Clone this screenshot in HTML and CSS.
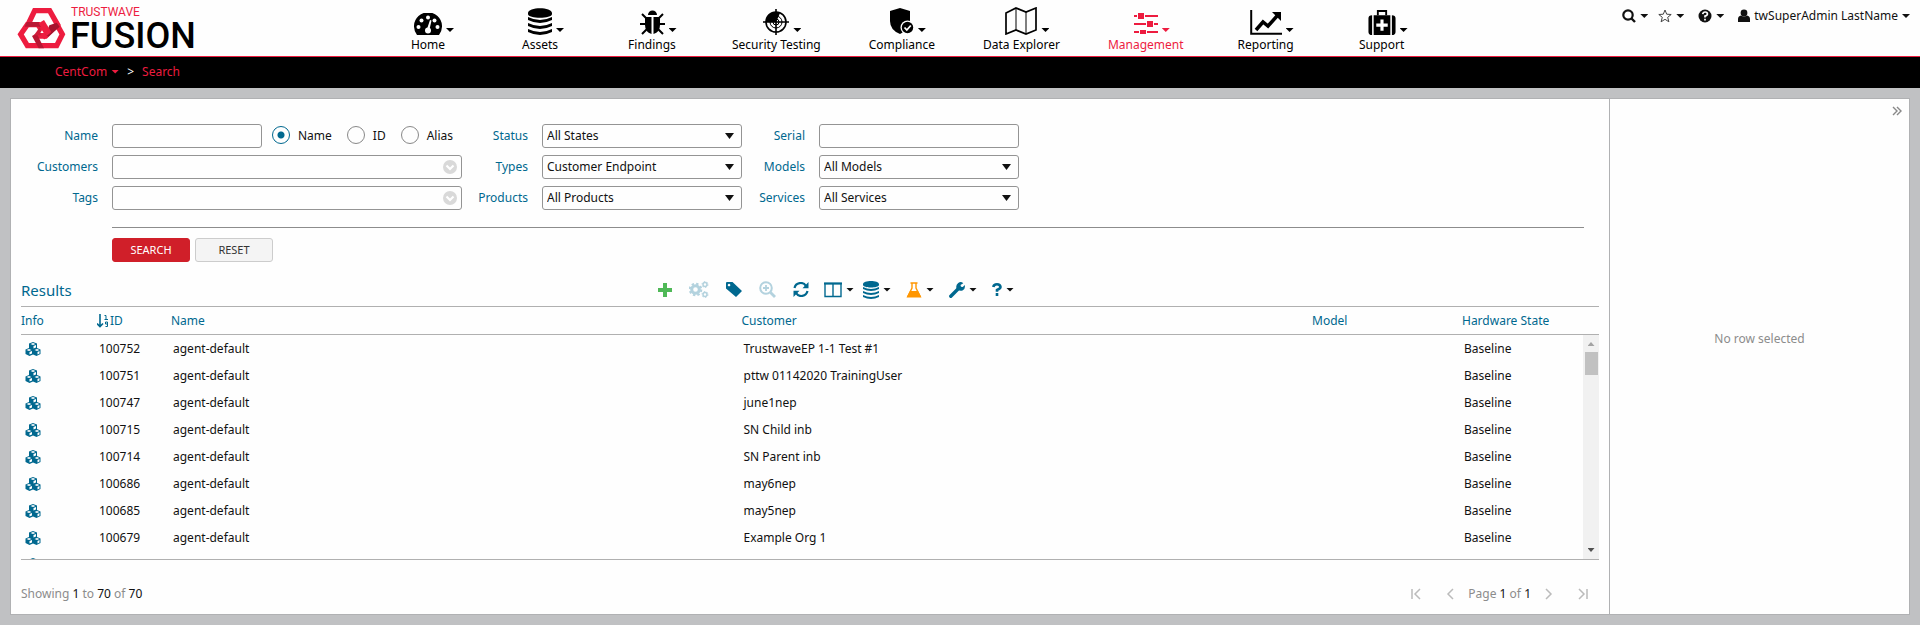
FILE: index.html
```html
<!DOCTYPE html>
<html lang="en">
<head>
<meta charset="utf-8">
<title>Fusion - Search</title>
<link rel="stylesheet" href="styles.css">
</head>
<body>
<svg class="defs" aria-hidden="true">
  <symbol id="cubes" viewBox="0 0 32 28">
    <path fill="currentColor" fill-rule="evenodd" d="M16 0l8 3v9l7 3v9l-8 4-7-3-7 3-8-4v-9l7-3V3zM16 2l-5 2 5 2 5-2zM17 13l5-2V6l-5 2zM8 14l-5 2 5 2 5-2zM9 25l5-2v-5l-5 2zM24 14l-5 2 5 2 5-2zM25 25l4-2v-5l-4 2z"/>
  </symbol>
  <symbol id="db" viewBox="0 0 24 27">
    <path fill="currentColor" d="M0 5C0-1.500 24-1.500 24 5v1C24 11 0 11 0 6zM0 9q12 6 24 0v3q-12 6-24 0zM0 15q12 6 24 0v3q-12 6-24 0zM0 21q12 6 24 0v3q-12 6-24 0z"/>
  </symbol>
  <symbol id="first" viewBox="0 0 10 12"><path d="M1 1v10M9 1L4 6l5 5" fill="none" stroke="currentColor" stroke-width="1.500"/></symbol>
  <symbol id="prev" viewBox="0 0 10 12"><path d="M8 1L3 6l5 5" fill="none" stroke="currentColor" stroke-width="1.500"/></symbol>
  <symbol id="drop" viewBox="0 0 14 14"><circle cx="7" cy="7" r="7" fill="#d9d9d9"/><path d="M3.500 5.500L7 9l3.500-3.500" fill="none" stroke="#fff" stroke-width="2.200"/></symbol>
</svg>

<header class="top">
  <a class="brand" href="#">
    <svg class="mark" viewBox="12 14 150 132" aria-hidden="true">
      <g fill="none" stroke="#ed1c3f" stroke-width="16">
        <path d="M46 74L68 28h45l27 48"/>
        <path d="M84 70H46L26 99l20 34h88l17-34-16-29-34 34H74"/>
        <path d="M76 66l27 44"/>
      </g>
      <path d="M44 62h36l8 14H38z" fill="#b81733"/>
      <path d="M60 104l14-8 22 45H80z" fill="#b81733"/>
      <path d="M112 72l22-8 9 12-34 30-8-6z" fill="#a5132d"/>
      <path d="M96 56l22 36-14 12-24-38z" fill="#ed1c3f"/>
      <path d="M84 76l-18 26h22z" fill="#d01b39"/>
      <path d="M90 87l5 8H85z" fill="#fff"/>
    </svg>
    <span class="brand-text"><span class="brand-small">TRUSTWAVE</span><span class="brand-big">FUSION</span></span>
  </a>
  <nav class="nav">
    <a class="item" href="#"><span class="ico"><svg width="28" height="22" viewBox="0 0 28 22"><path fill="currentColor" d="M3 22A14 14 0 1 1 25 22z"/><g fill="#fff"><circle cx="4.500" cy="14" r="2"/><circle cx="7.500" cy="7.500" r="2"/><circle cx="14" cy="4.500" r="2"/><circle cx="20.500" cy="7.500" r="2"/><circle cx="23.500" cy="14" r="2"/><circle cx="14" cy="17.500" r="3"/><path d="M13 16l3-9 1.500.500-2 9z"/></g></svg><i class="caret"></i></span>Home</a>
    <a class="item" href="#"><span class="ico"><svg width="24" height="27"><use href="#db"/></svg><i class="caret"></i></span>Assets</a>
    <a class="item" href="#"><span class="ico"><svg width="25" height="25" viewBox="0 0 25 25"><path fill="currentColor" d="M8 5a4.500 4.500 0 0 1 9 0zM5 7h6.500v17Q5 22 5 15zM13.500 7H20v8q0 7-6.500 9z"/><path d="M2 4l4 4M23 4l-4 4M0 14h6M25 14h-6M2 24l5-5M23 24l-5-5" stroke="currentColor" stroke-width="2"/></svg><i class="caret"></i></span>Findings</a>
    <a class="item" href="#"><span class="ico"><svg width="26" height="26" viewBox="0 0 26 26"><g fill="none" stroke="currentColor"><circle cx="13" cy="13" r="10" stroke-width="1.600"/><circle cx="13" cy="13" r="6"/><circle cx="13" cy="13" r="3"/><path d="M13 0v26M0 13h26" stroke-width="1.600"/></g><path d="M13 13H3A10 10 0 0 1 13 3z" fill="currentColor"/><path d="M13 3a10 10 0 0 1 4 1q-2 5-4 9z" fill="currentColor"/></svg><i class="caret"></i></span>Security Testing</a>
    <a class="item" href="#"><span class="ico"><svg width="24" height="27" viewBox="0 0 24 27"><path d="M0 3l10-3 10 3v12q-3 8-10 11Q0 22 0 13z" fill="currentColor"/><circle cx="17.500" cy="19.500" r="7" fill="#fff"/><circle cx="17.500" cy="19.500" r="5.700" fill="currentColor"/><path d="M14.500 19.500l2.300 2.500 4-4.500" stroke="#fff" stroke-width="1.800" fill="none"/></svg><i class="caret"></i></span>Compliance</a>
    <a class="item" href="#"><span class="ico"><svg width="32" height="28" viewBox="0 0 32 28"><path d="M1 6l10-5 10 4 10-4v22l-10 4-10-4-10 4z" fill="none" stroke="currentColor" stroke-width="1.700"/><path d="M11 1v22M21 5v22" stroke="currentColor"/></svg><i class="caret"></i></span>Data Explorer</a>
    <a class="item active" href="#"><span class="ico"><svg width="24" height="22" viewBox="0 0 24 22"><path fill="currentColor" d="M0 2h3v2H0zM4 0h6v6H4zM11 2h13v2H11zM0 10h12v2H0zM13 8h6v6h-6zM20 10h4v2h-4zM0 18h5v2H0zM6 17h6v4H6zM13 18h11v2H13z"/></svg><i class="caret"></i></span>Management</a>
    <a class="item" href="#"><span class="ico"><svg width="32" height="25" viewBox="0 0 32 25"><path d="M1.200 0v23.800H32" fill="none" stroke="currentColor" stroke-width="2"/><path d="M6 20l7-8 5 4 9-10" fill="none" stroke="currentColor" stroke-width="3.500"/><path d="M22 2h9v9z" fill="currentColor"/></svg><i class="caret"></i></span>Reporting</a>
    <a class="item" href="#"><span class="ico"><svg width="28" height="25" viewBox="0 0 26 24"><path d="M9 5V1h8v4" fill="none" stroke="currentColor" stroke-width="1.800"/><path fill="currentColor" d="M5 5h16v19H5zM0 8q0-3 3.500-3v19Q0 24 0 21zM26 8q0-3-3.500-3v19Q26 24 26 21z"/><path d="M11.500 9h3v4h4v3h-4v4h-3v-4h-4v-3h4z" fill="#fff"/></svg><i class="caret"></i></span>Support</a>
  </nav>
  <div class="tools">
    <button class="tool" aria-label="Search"><svg width="14" height="14" viewBox="0 0 14 14"><circle cx="6" cy="6" r="4.700" fill="none" stroke="currentColor" stroke-width="2.200"/><path d="M9.500 9.500l3.500 3.500" stroke="currentColor" stroke-width="2.400"/></svg><i class="caret"></i></button>
    <button class="tool" aria-label="Favorites"><svg width="14" height="14" viewBox="0 0 14 14"><path d="M7 1l1.700 4.200 4.500.300-3.500 2.800 1.200 4.500L7 10.300l-3.900 2.500 1.200-4.500L.8 5.500l4.500-.3z" fill="none" stroke="#444"/></svg><i class="caret"></i></button>
    <button class="tool help" aria-label="Help"><svg width="14" height="14" viewBox="0 0 14 14"><circle cx="7" cy="7" r="6.500" fill="currentColor"/><path d="M4.700 5.200Q5 3 7.200 3t2.200 2Q9.400 6.500 7 7v1.500M7 9.700v1.800" fill="none" stroke="#fff" stroke-width="1.700"/></svg><i class="caret"></i></button>
    <button class="tool user"><svg width="12" height="14" viewBox="0 0 12 14"><circle cx="6" cy="4" r="3.400" fill="currentColor"/><path d="M0 13V10q0-3 3-3.500 3 2 6 0 3 .500 3 3.500v3z" fill="currentColor"/></svg>twSuperAdmin LastName<i class="caret"></i></button>
  </div>
</header>

<div class="crumbs"><a href="#">CentCom<i class="caret"></i></a><span>&gt;</span><a href="#">Search</a></div>

<main class="page">
  <section class="content">
    <form class="filters">
      <label for="f-name">Name</label>
      <div class="name-row">
        <input class="field short" id="f-name" type="text">
        <label class="radio"><input type="radio" name="by" checked>Name</label>
        <label class="radio"><input type="radio" name="by">ID</label>
        <label class="radio"><input type="radio" name="by">Alias</label>
      </div>
      <label for="f-status">Status</label>
      <div class="combo"><select class="field" id="f-status"><option>All States</option></select><i class="arrow"></i></div>
      <label for="f-serial">Serial</label>
      <input class="field" id="f-serial" type="text">

      <label for="f-cust">Customers</label>
      <div class="combo"><input class="field" id="f-cust" type="text"><svg class="drop"><use href="#drop"/></svg></div>
      <label for="f-types">Types</label>
      <div class="combo"><select class="field" id="f-types"><option>Customer Endpoint</option></select><i class="arrow"></i></div>
      <label for="f-models">Models</label>
      <div class="combo"><select class="field" id="f-models"><option>All Models</option></select><i class="arrow"></i></div>

      <label for="f-tags">Tags</label>
      <div class="combo"><input class="field" id="f-tags" type="text"><svg class="drop"><use href="#drop"/></svg></div>
      <label for="f-prod">Products</label>
      <div class="combo"><select class="field" id="f-prod"><option>All Products</option></select><i class="arrow"></i></div>
      <label for="f-serv">Services</label>
      <div class="combo"><select class="field" id="f-serv"><option>All Services</option></select><i class="arrow"></i></div>
    </form>
    <div class="actions">
      <button class="btn primary">SEARCH</button>
      <button class="btn">RESET</button>
    </div>

    <div class="results-bar">
      <h2>Results</h2>
      <div class="toolbar">
        <button class="tb" aria-label="Add"><svg width="14" height="14" viewBox="0 0 14 14"><path d="M7 0v14M0 7h14" stroke="#4fb857" stroke-width="4"/></svg></button>
        <button class="tb dim" aria-label="Settings"><svg width="20" height="17" viewBox="0 0 20 17"><g fill="none" stroke="currentColor"><circle cx="6.500" cy="8.500" r="3.800" stroke-width="3"/><circle cx="6.500" cy="8.500" r="5.800" stroke-width="2" stroke-dasharray="2.400 2.150"/><circle cx="16" cy="3.500" r="2" stroke-width="1.500"/><circle cx="16" cy="3.500" r="3" stroke-width="1" stroke-dasharray="1.400 1.740"/><circle cx="16" cy="13.500" r="2" stroke-width="1.500"/><circle cx="16" cy="13.500" r="3" stroke-width="1" stroke-dasharray="1.400 1.740"/></g></svg></button>
        <button class="tb" aria-label="Tag"><svg width="16" height="15" viewBox="0 0 16 15"><path fill="currentColor" fill-rule="evenodd" d="M0 1q0-1 1-1h5.500L16 9l-6 6L0 6.500zM3 1.700a1.300 1.300 0 1 0 .1 0z"/></svg></button>
        <button class="tb dim" aria-label="Zoom"><svg width="17" height="17" viewBox="0 0 17 17"><circle cx="7" cy="7" r="5.800" fill="none" stroke="currentColor" stroke-width="2"/><path d="M7 4v6M4 7h6" stroke="currentColor" stroke-width="1.800"/><path d="M11.500 11.500l4.500 4.500" stroke="currentColor" stroke-width="2.800"/></svg></button>
        <button class="tb" aria-label="Refresh"><svg width="16" height="15" viewBox="0 0 16 15"><path d="M1.500 6A6.300 6.300 0 0 1 13 4M14.500 9A6.300 6.300 0 0 1 3 11" fill="none" stroke="currentColor" stroke-width="2.200"/><path d="M15.500 0v6.200H9.500zM.5 15V8.800h6z" fill="currentColor"/></svg></button>
        <button class="tb menu" aria-label="Columns"><svg width="18" height="16" viewBox="0 0 18 16"><path d="M1 1.500h16v13H1zM9 1.500v13" fill="none" stroke="currentColor" stroke-width="1.400"/><path d="M0 1.500h18" stroke="currentColor" stroke-width="2"/></svg><i class="caret"></i></button>
        <button class="tb menu tight" aria-label="Data"><svg width="16" height="18"><use href="#db"/></svg><i class="caret"></i></button>
        <button class="tb menu" aria-label="Lab"><svg width="16" height="16" viewBox="0 0 16 16"><path d="M4.500 1h7M6 1v5L1.500 15M10 1v5l4.500 9" fill="none" stroke="#ff9600" stroke-width="1.400"/><path d="M4 9h8l3.500 6.500H.5z" fill="#ff9600"/></svg><i class="caret"></i></button>
        <button class="tb menu" aria-label="Tools"><svg width="16" height="16" viewBox="0 0 16 16"><path d="M1.800 14.200L9 7" stroke="currentColor" stroke-width="3.400" stroke-linecap="round"/><path d="M14.300 1.300L11.500 3l.5 1.800 1.800.3L15.700 3q1 4.300-2.200 5.500-2.500.700-4.500-.5L7.500 6.500Q6.500 3 9.200 1t5.100.3z" fill="currentColor"/></svg><i class="caret"></i></button>
        <button class="tb menu" aria-label="Help"><svg width="10" height="13" viewBox="0 0 10 13"><path d="M1.300 4Q1.800 1.300 5 1.300T8.500 4Q8.500 5.500 5 7v1.800M5 10v3" fill="none" stroke="currentColor" stroke-width="2.600"/></svg><i class="caret"></i></button>
      </div>
    </div>

    <div class="grid-head">
      <table>
        <colgroup><col class="c-info"><col class="c-id"><col class="c-text"><col class="c-text"><col class="c-model"><col class="c-state"></colgroup>
        <thead><tr><th>Info</th><th><span class="sort"><svg width="12" height="14" viewBox="0 0 12 14"><path d="M3 0v12M0 9.500l3 3 3-3" fill="none" stroke="currentColor" stroke-width="1.600"/><path d="M7.500 1.500h1.500V5M7.500 5.500h3.500M10.500 10H8.500V8h2v4.500h-2" fill="none" stroke="currentColor"/></svg>ID</span></th><th>Name</th><th>Customer</th><th>Model</th><th>Hardware State</th></tr></thead>
      </table>
    </div>
    <div class="grid-body">
      <div class="rows">
        <table>
          <colgroup><col class="c-info"><col class="c-id"><col class="c-text"><col class="c-text"><col class="c-model"><col class="c-state"></colgroup>
          <tbody>
            <tr><td><svg class="cubes"><use href="#cubes"/></svg></td><td>100752</td><td>agent-default</td><td>TrustwaveEP 1-1 Test #1</td><td></td><td>Baseline</td></tr>
            <tr><td><svg class="cubes"><use href="#cubes"/></svg></td><td>100751</td><td>agent-default</td><td>pttw 01142020 TrainingUser</td><td></td><td>Baseline</td></tr>
            <tr><td><svg class="cubes"><use href="#cubes"/></svg></td><td>100747</td><td>agent-default</td><td>june1nep</td><td></td><td>Baseline</td></tr>
            <tr><td><svg class="cubes"><use href="#cubes"/></svg></td><td>100715</td><td>agent-default</td><td>SN Child inb</td><td></td><td>Baseline</td></tr>
            <tr><td><svg class="cubes"><use href="#cubes"/></svg></td><td>100714</td><td>agent-default</td><td>SN Parent inb</td><td></td><td>Baseline</td></tr>
            <tr><td><svg class="cubes"><use href="#cubes"/></svg></td><td>100686</td><td>agent-default</td><td>may6nep</td><td></td><td>Baseline</td></tr>
            <tr><td><svg class="cubes"><use href="#cubes"/></svg></td><td>100685</td><td>agent-default</td><td>may5nep</td><td></td><td>Baseline</td></tr>
            <tr><td><svg class="cubes"><use href="#cubes"/></svg></td><td>100679</td><td>agent-default</td><td>Example Org 1</td><td></td><td>Baseline</td></tr>
            <tr><td><svg class="cubes"><use href="#cubes"/></svg></td><td></td><td></td><td></td><td></td><td></td></tr>
          </tbody>
        </table>
      </div>
      <div class="scrollbar"><i class="up"></i><i class="thumb"></i><i class="down"></i></div>
    </div>
    <footer class="pager">
      <span>Showing <b>1</b> to <b>70</b> of <b>70</b></span>
      <span class="pages">
        <button class="pg" aria-label="First page"><svg><use href="#first"/></svg></button>
        <button class="pg" aria-label="Previous page"><svg><use href="#prev"/></svg></button>
        <span class="page-no">Page <b>1</b> of <b>1</b></span>
        <button class="pg next" aria-label="Next page"><svg><use href="#prev"/></svg></button>
        <button class="pg next" aria-label="Last page"><svg><use href="#first"/></svg></button>
      </span>
    </footer>
  </section>
  <aside class="side">
    <button class="collapse" aria-label="Collapse"><svg width="10" height="10" viewBox="0 0 10 10"><path d="M1 1l4 4-4 4M5 1l4 4-4 4" fill="none" stroke="currentColor" stroke-width="1.400"/></svg></button>
    <p>No row selected</p>
  </aside>
</main>
</body>
</html>
```
FILE: styles.css
```css
* { box-sizing: border-box; }
body {
  margin: 0;
  min-height: 100vh;
  display: flex;
  flex-direction: column;
  background: #c0c1c3;
  color: #111;
  font: 12px/16px "Noto Sans", "DejaVu Sans", sans-serif;
}
a { color: inherit; text-decoration: none; }
button { border: 0; padding: 0; background: none; color: inherit; font: inherit; }
svg { display: block; flex: none; }
b { font-weight: 400; color: #111; }
.defs { position: absolute; width: 0; height: 0; }
.caret { flex: none; width: 8px; height: 4px; background: currentColor; clip-path: polygon(0 0, 100% 0, 50% 100%); }

.top { display: flex; height: 57px; background: #fefefe; border-bottom: 1px solid #ed1c3f; }
.brand { display: flex; width: 372px; padding: 6px 0 0 16px; gap: 4px; }
.mark { width: 50px; height: 44px; }
.brand-text { display: flex; flex-direction: column; font-family: Roboto, sans-serif; }
.brand-small { color: #ed1c3f; font-size: 12px; line-height: 12px; padding-left: 1px; }
.brand-big { color: #000; font-size: 36px; font-weight: 500; line-height: 36px; }

.nav { display: flex; }
.item { min-width: 112px; padding: 0 24px; display: flex; flex-direction: column; align-items: center; color: #000; }
.item:nth-last-child(-n+2) { min-width: 116px; }
.item.active { color: #ed1c3f; }
.ico { position: relative; display: flex; align-items: flex-end; height: 35px; margin-bottom: 2px; }
.ico .caret { position: absolute; left: 100%; bottom: 3px; margin-left: 4px; }

.tools { display: flex; align-items: center; height: 32px; margin-left: auto; padding-right: 10px; gap: 10px; }
.tool { display: flex; align-items: center; gap: 4px; }
.help, .user { margin-left: 4px; }

.crumbs { display: flex; align-items: center; height: 31px; padding: 0 0 2px 55px; gap: 8px; background: #000; color: #ed1c3f; }
.crumbs a { display: flex; align-items: center; gap: 4px; }
.crumbs span { color: #fff; }

.page { flex: 1; display: flex; margin: 10px; border: 1px solid #b0b1b3; background: #fefefe; }
.content { flex: 1; display: flex; flex-direction: column; padding: 25px 10px 0; }
.side { width: 300px; border-left: 1px solid #b0b1b3; text-align: center; color: #8c8c8c; }
.collapse { display: block; margin: 7px 7px 0 auto; color: #888; }
.side p { margin: 215px 0 0; }

.filters {
  display: grid;
  grid-template-columns: 77px 350px 52px 200px 49px 200px;
  grid-auto-rows: 24px;
  gap: 7px 14px;
  align-items: center;
}
.filters > label { color: #00688f; justify-self: end; }
.field {
  width: 100%;
  height: 24px;
  padding: 0 4px;
  border: 1px solid #949494;
  border-radius: 3px;
  background: #fefefe;
  color: #111;
  font: inherit;
  appearance: none;
}
.field.short { width: 150px; }
.combo { position: relative; }
.arrow { position: absolute; right: 8px; top: 9px; width: 9px; height: 6px; background: #111; clip-path: polygon(0 0, 100% 0, 50% 100%); }
.drop { position: absolute; right: 5px; top: 5px; width: 14px; height: 14px; }
.name-row { display: flex; align-items: center; }
.radio { display: flex; align-items: center; margin-left: 15px; gap: 8px; }
.field + .radio { margin-left: 10px; }
.radio input { appearance: none; width: 18px; height: 18px; margin: 0 0 3px; border: 1px solid #888; border-radius: 50%; }
.radio input:checked { border-color: #00688f; background: radial-gradient(circle, #00688f 3px, transparent 4px); }

.actions { display: flex; gap: 5px; margin: 17px 15px 0 91px; padding-top: 10px; border-top: 1px solid #8c8c8c; }
.btn { width: 78px; height: 24px; border: 1px solid #ccc; border-radius: 3px; background: #f4f4f4; color: #333; font-size: 11px; }
.btn.primary { border-color: #d01f29; background: #d01f29; color: #fff; }

.results-bar { display: grid; grid-template-columns: 637px 1fr; align-items: center; height: 33px; margin-top: 11px; color: #00688f; }
.results-bar h2 { margin: 0; font-size: 15px; line-height: 20px; font-weight: 400; }
.toolbar { display: flex; align-items: center; gap: 17px; }
.tb { display: flex; align-items: center; }
.menu { gap: 4px; margin-left: -2px; }
.tight { margin-left: -8px; }
.tb .caret { color: #111; }
.dim { color: #b3d2de; }

table { width: 100%; border-collapse: collapse; table-layout: fixed; }
.c-info { width: 76px; }
.c-id { width: 74px; }
.c-model { width: 150px; }
.c-state { width: 121px; }
th { height: 27px; padding: 0; font-weight: 400; text-align: left; white-space: nowrap; color: #00688f; }
td { height: 27px; padding: 0 0 0 2px; white-space: nowrap; }
.grid-head { padding-right: 16px; border: solid #b0b0b0; border-width: 1px 0; }
.sort { display: flex; align-items: center; gap: 1px; }
.cubes { width: 16px; height: 14px; margin-left: 2px; color: #00688f; }
.grid-body { flex: 1 0 225px; height: 225px; display: flex; border-bottom: 1px solid #b0b0b0; }
.rows { flex: 1; overflow: hidden; }
.scrollbar { width: 16px; display: flex; flex-direction: column; align-items: center; padding: 7px 0; background: #f1f1f1; }
.up, .down { width: 7px; height: 4px; background: #a3a3a3; clip-path: polygon(50% 0, 100% 100%, 0 100%); }
.down { margin-top: auto; background: #505050; clip-path: polygon(0 0, 100% 0, 50% 100%); }
.thumb { width: 13px; height: 23px; margin-top: 6px; background: #c1c1c1; }

.pager { display: flex; justify-content: space-between; align-items: center; height: 54px; padding: 13px 11px 0 0; color: #8c8c8c; }
.pages { display: flex; align-items: center; }
.pg { color: #bbb; }
.pg svg { width: 10px; height: 12px; }
.pg:first-child { margin-right: 24px; }
.pg:last-child { margin-left: 24px; }
.page-no { margin: 0 13px; }
.next svg { transform: rotate(180deg); }
```
